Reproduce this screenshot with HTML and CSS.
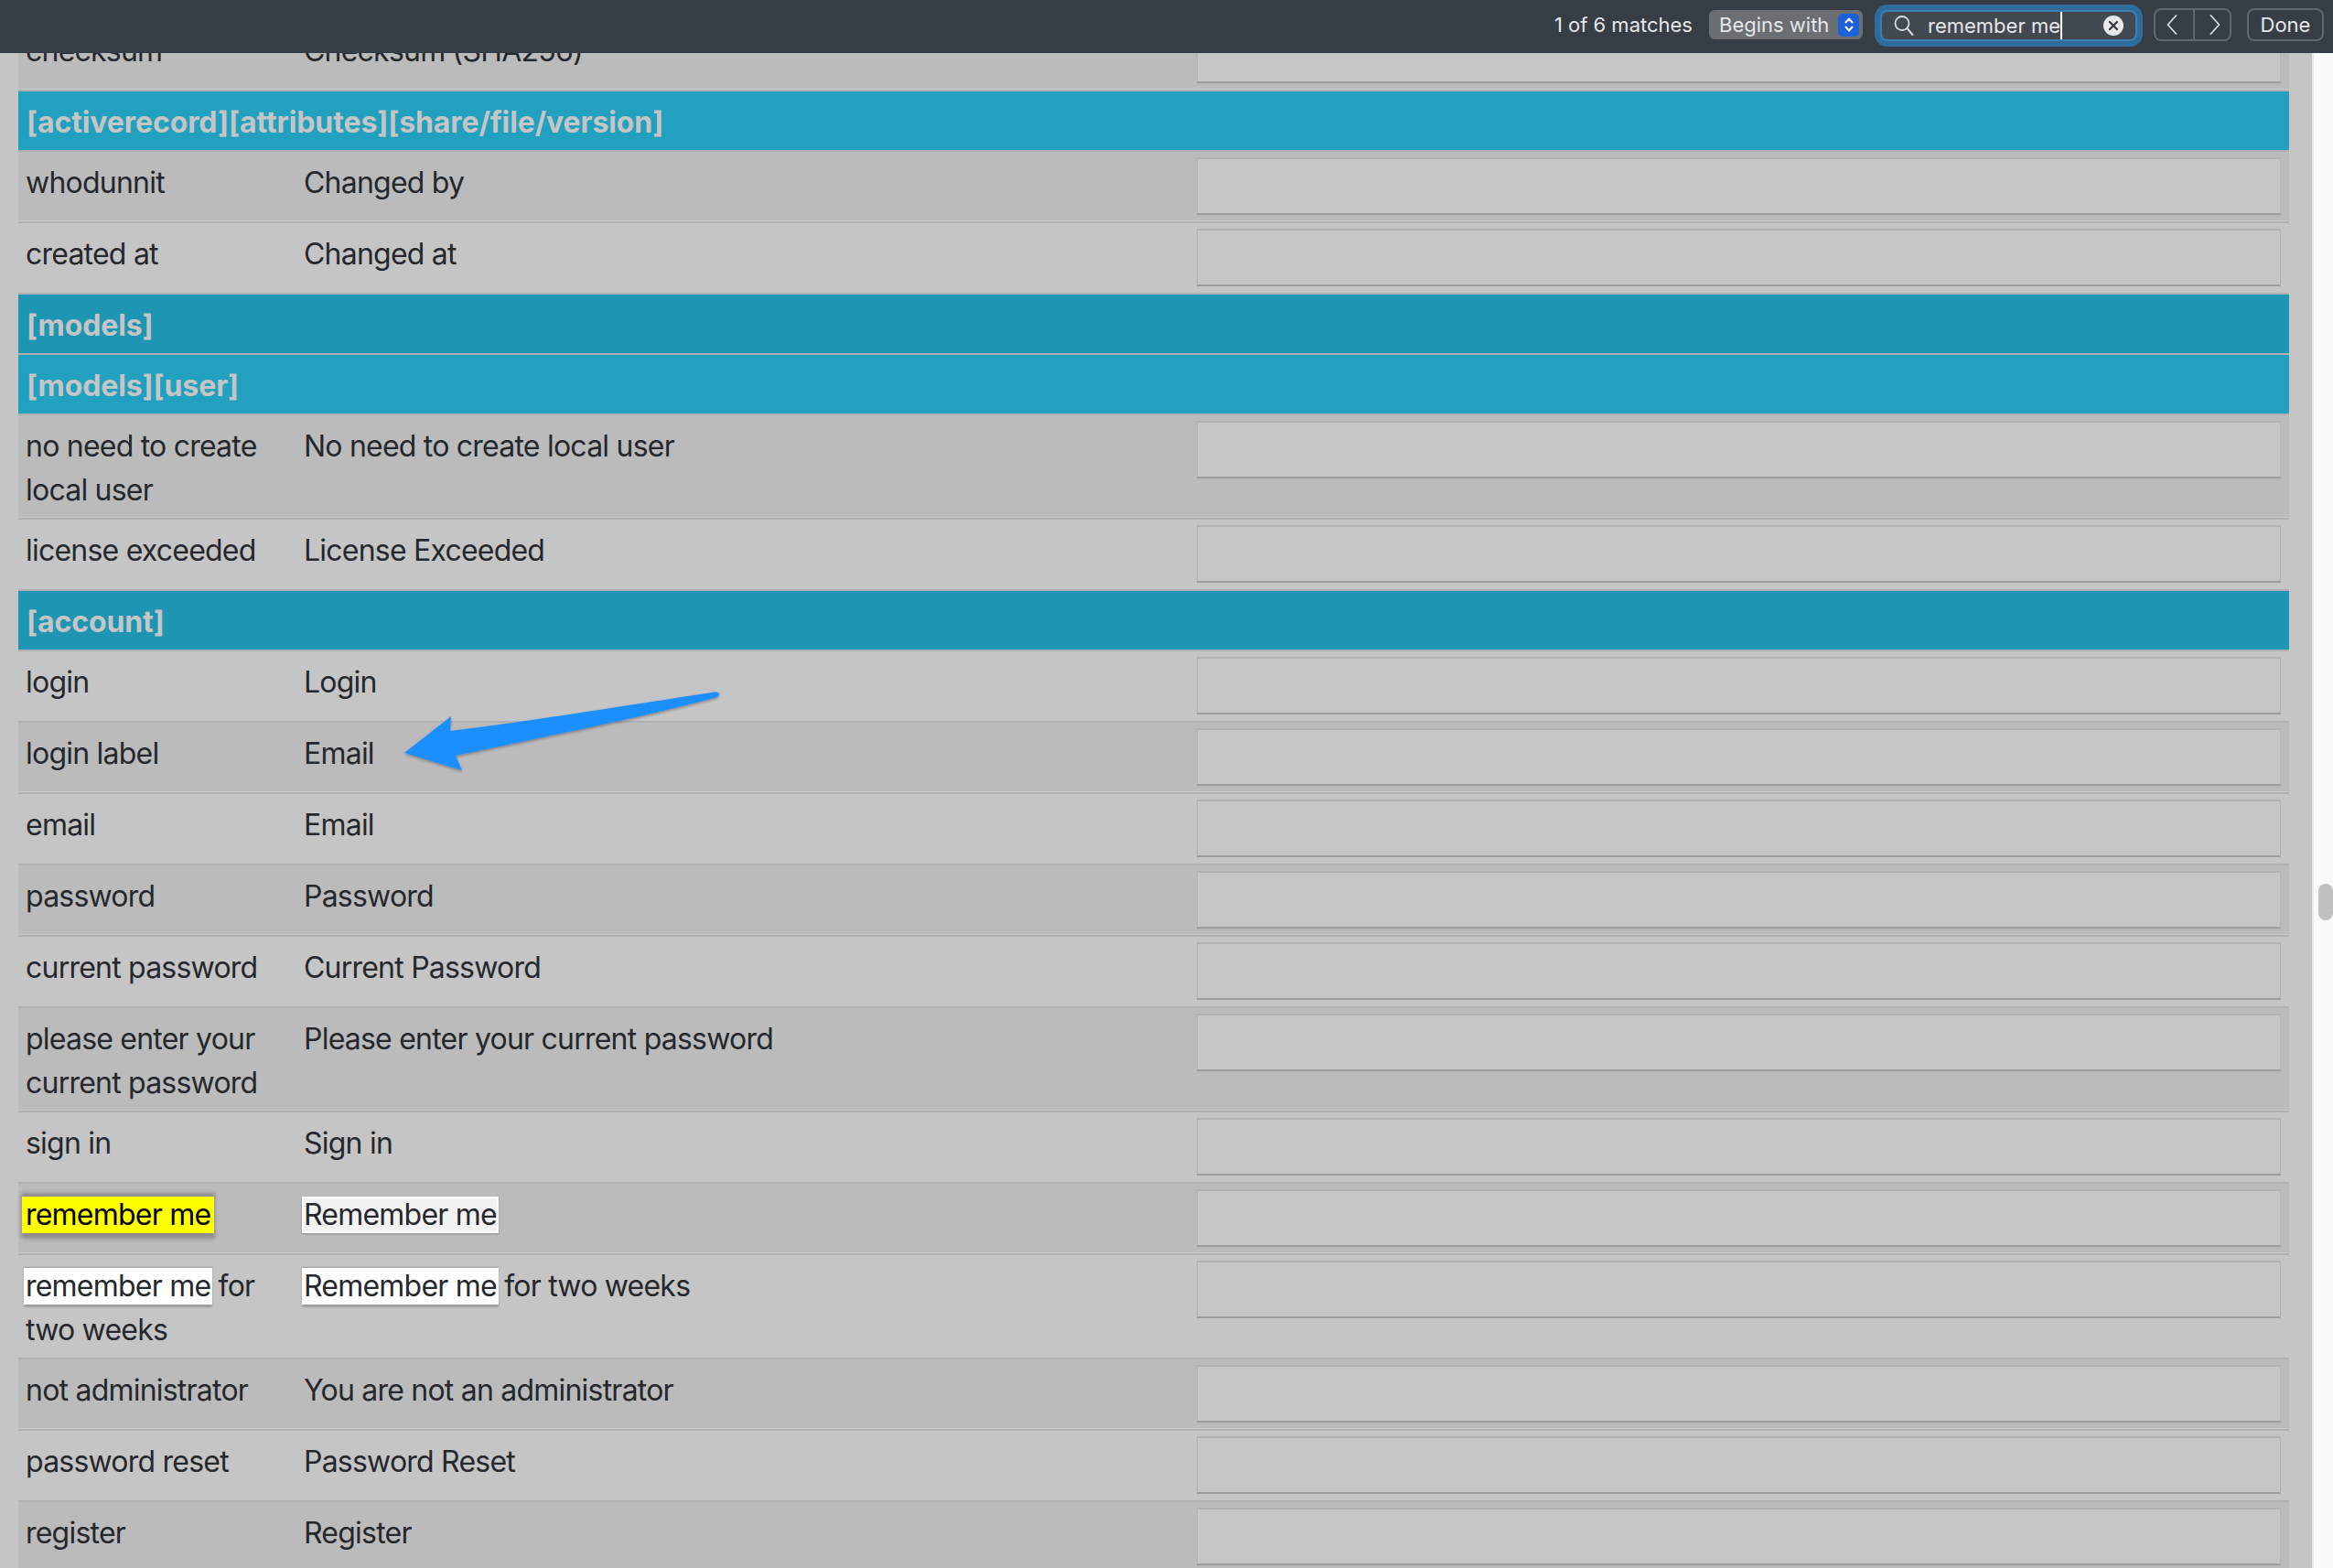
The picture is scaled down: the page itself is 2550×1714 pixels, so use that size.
FILE: index.html
```html
<!DOCTYPE html>
<html lang="en">
<head>
<meta charset="utf-8">
<title>Translations</title>
<link rel="stylesheet" href="styles.css">
</head>
<body>
<div class="findbar">
  <span class="count">1 of 6 matches</span>
  <div class="mode">
    <span>Begins with</span>
    <span class="stepper">
      <svg width="12" height="20" viewBox="0 0 12 20"><path d="M2.5 7.5 6 3.5l3.5 4M2.5 12.5 6 16.5l3.500-4" fill="none" stroke="#fff" stroke-width="2" stroke-linecap="round" stroke-linejoin="round"/></svg>
    </span>
  </div>
  <div class="search">
    <svg class="glass" width="24" height="26" viewBox="0 0 24 26"><circle cx="10" cy="10.5" r="7.5" fill="none" stroke="#d8dadc" stroke-width="1.8"/><path d="m15.5 16 6 7" stroke="#d8dadc" stroke-width="2" stroke-linecap="round"/></svg>
    <span class="query">remember me</span>
    <svg class="clear" width="22" height="22" viewBox="0 0 22 22"><circle cx="11" cy="11" r="11" fill="#e8e9ea"/><path d="m7 7 8 8m0-8-8 8" stroke="#373d44" stroke-width="2.4" stroke-linecap="round"/></svg>
  </div>
  <div class="pager">
    <button class="pager-btn pager-prev" type="button"><svg width="14" height="26" viewBox="0 0 14 26"><path d="M11.5 3 2.500 13l9 10" fill="none" stroke="#d8dadc" stroke-width="1.8" stroke-linecap="round" stroke-linejoin="round"/></svg></button>
    <button class="pager-btn pager-next" type="button"><svg width="14" height="26" viewBox="0 0 14 26"><path d="m2.500 3 9 10-9 10" fill="none" stroke="#d8dadc" stroke-width="1.8" stroke-linecap="round" stroke-linejoin="round"/></svg></button>
  </div>
  <button class="done" type="button">Done</button>
</div>

<div class="layout">
  <main class="content">
    <table class="grid">
      <colgroup><col class="c-key"><col class="c-source"><col class="c-target"></colgroup>
      <tbody>
        <tr><td>checksum</td><td>Checksum (SHA256)</td><td class="cell-input"><input class="field" type="text"></td></tr>
        <tr class="section"><th colspan="3">[activerecord][attributes][share/file/version]</th></tr>
        <tr><td>whodunnit</td><td>Changed by</td><td class="cell-input"><input class="field" type="text"></td></tr>
        <tr><td>created at</td><td>Changed at</td><td class="cell-input"><input class="field" type="text"></td></tr>
        <tr class="section"><th colspan="3">[models]</th></tr>
        <tr class="section"><th colspan="3">[models][user]</th></tr>
        <tr><td>no need to create local user</td><td>No need to create local user</td><td class="cell-input"><input class="field" type="text"></td></tr>
        <tr><td>license exceeded</td><td>License Exceeded</td><td class="cell-input"><input class="field" type="text"></td></tr>
        <tr class="section"><th colspan="3">[account]</th></tr>
        <tr><td>login</td><td>Login</td><td class="cell-input"><input class="field" type="text"></td></tr>
        <tr><td>login label</td><td>Email</td><td class="cell-input"><input class="field" type="text"></td></tr>
        <tr><td>email</td><td>Email</td><td class="cell-input"><input class="field" type="text"></td></tr>
        <tr><td>password</td><td>Password</td><td class="cell-input"><input class="field" type="text"></td></tr>
        <tr><td>current password</td><td>Current Password</td><td class="cell-input"><input class="field" type="text"></td></tr>
        <tr><td>please enter your current password</td><td>Please enter your current password</td><td class="cell-input"><input class="field" type="text"></td></tr>
        <tr><td>sign in</td><td>Sign in</td><td class="cell-input"><input class="field" type="text"></td></tr>
        <tr><td><span class="hit-current">remember me</span></td><td><span class="hit-dim">Remember me</span></td><td class="cell-input"><input class="field" type="text"></td></tr>
        <tr><td><span class="hit">remember me</span> for two weeks</td><td><span class="hit">Remember me</span> for two weeks</td><td class="cell-input"><input class="field" type="text"></td></tr>
        <tr><td>not administrator</td><td>You are not an administrator</td><td class="cell-input"><input class="field" type="text"></td></tr>
        <tr><td>password reset</td><td>Password Reset</td><td class="cell-input"><input class="field" type="text"></td></tr>
        <tr><td>register</td><td>Register</td><td class="cell-input"><input class="field" type="text"></td></tr>
      </tbody>
    </table>
  </main>
  <aside class="scrollbar"><div class="thumb"></div></aside>
</div>

<svg class="arrow" width="360" height="100" viewBox="430 750 360 100">
  <defs><filter id="arrow-shadow" x="-5%" y="-10%" width="110%" height="125%"><feDropShadow dx="0" dy="1.5" stdDeviation="1.5" flood-color="#000" flood-opacity=".35"/></filter></defs>
  <path d="M442 823 493 783 492 799C560 791 640 778 781 756.500Q786 756 786 759 786 761 782 762.500C690 787 590 806 498 826L505 842Z" fill="#1e8fff" filter="url(#arrow-shadow)"/>
</svg>
</body>
</html>
```
FILE: styles.css
```css
* { box-sizing: border-box; }
html, body { margin: 0; height: 100%; }
body {
  width: 2550px;
  height: 1714px;
  overflow: hidden;
  background: #c5c5c5;
  color: #25282c;
  font-family: Inter, "Liberation Sans", sans-serif;
}

.findbar {
  position: absolute;
  top: 0;
  left: 0;
  right: 0;
  z-index: 3;
  height: 58px;
  display: flex;
  align-items: center;
  justify-content: flex-end;
  padding: 0 10px 4px 0;
  background: #373d44;
  color: #e6e7e8;
  font-size: 22px;
}
.count { margin-right: 18px; }
.mode {
  width: 168px;
  height: 32px;
  display: flex;
  align-items: center;
  justify-content: space-between;
  padding: 0 4px 0 11px;
  border-radius: 6px;
  background: #6b6f73;
  margin-right: 21px;
}
.stepper {
  width: 23px;
  height: 25px;
  display: flex;
  align-items: center;
  justify-content: center;
  border-radius: 5px;
  background: #1b62d8;
}
.search {
  position: relative;
  width: 277px;
  height: 30px;
  display: flex;
  align-items: center;
  padding-left: 12px;
  margin-right: 20px;
  margin-top: 2px;
  border-radius: 6px;
  background: #434950;
  box-shadow: 0 0 0 2px #3d7fb0, 0 0 0 8px #2f6c9e;
}
.glass { margin-right: 14px; flex: none; }
.query { border-right: 2px solid #fff; line-height: 30px; white-space: nowrap; }
.clear { position: absolute; right: 13px; top: 4px; }
.pager {
  display: flex;
  width: 85px;
  height: 36px;
  margin-right: 17px;
  border: 2px solid #62676c;
  border-radius: 8px;
}
.pager-btn {
  flex: 1;
  display: flex;
  align-items: center;
  padding: 0;
  border: 0;
  background: none;
}
.pager-prev { justify-content: flex-start; padding-left: 11px; }
.pager-next { justify-content: flex-end; padding-right: 9px; border-left: 2px solid #62676c; }
.done {
  width: 84px;
  height: 36px;
  padding: 0;
  border: 2px solid #62676c;
  border-radius: 8px;
  background: none;
  color: #e6e7e8;
  font: inherit;
}

.layout { display: flex; height: 100%; }
.content { flex: 1; min-width: 0; padding: 20px 25px 0 20px; }
.scrollbar {
  flex: none;
  width: 23px;
  padding: 966px 0 0 5px;
  background: #fafafa;
  border-left: 2px solid #e8e8e8;
}
.thumb { width: 16px; height: 40px; border-radius: 8px; background: #c1c1c1; }

.grid {
  width: 100%;
  table-layout: fixed;
  border-collapse: separate;
  border-spacing: 0;
  font-size: 32px;
  line-height: 48px;
  letter-spacing: -0.78px;
}
.c-key { width: 304px; }
.c-source { width: 977px; }
.grid td {
  padding: 10px 8px 6px;
  vertical-align: top;
  border-top: 2px solid #b0b0b4;
}
.grid tr:nth-child(odd) td { background: #bbbbbb; box-shadow: inset 0 -1px 0 #c8c8c8; }
.grid .cell-input { padding: 6px 9px 7px 7px; }
.field {
  display: block;
  width: 100%;
  height: 63px;
  background: #c6c6c6;
  border: 0;
  border-top: 2px solid #b1b1b1;
  border-left: 1px solid #b1b1b1;
  border-right: 1px solid #b4b4b4;
  border-bottom: 2px solid #9c9c9c;
}
.section th {
  padding: 10px 9px 6px;
  text-align: left;
  font-weight: 700;
  color: #c5c5c5;
  letter-spacing: -0.1px;
  background: #21a0bf;
  border-top: 2px solid #b0b0b4;
}
.section:nth-child(odd) th { background: #1e95b3; }

.hit, .hit-dim, .hit-current { display: inline-block; }
.hit {
  line-height: 40px;
  background: #fff;
  box-shadow: 2px 0 0 #fff, -2px 0 0 #fff, 0 1px 2px 2px rgba(0,0,0,.2);
}
.hit-dim {
  line-height: 36px;
  background: #f2f2f2;
  box-shadow: 0 0 0 2px #fff, 0 1px 2px 2px rgba(0,0,0,.25);
}
.hit-current {
  line-height: 40px;
  color: #000;
  background: #ffff00;
  box-shadow: 4px 0 0 #ffff00, -4px 0 0 #ffff00, 0 1px 4px 5px rgba(0,0,0,.25);
}

.arrow { position: absolute; left: 430px; top: 750px; z-index: 2; }
```
